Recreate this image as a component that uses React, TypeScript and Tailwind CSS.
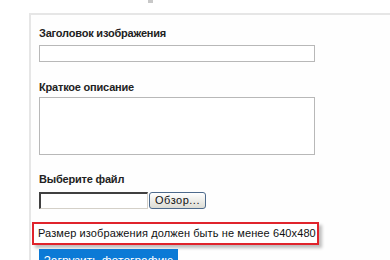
export default function App() {
  return (
    <div className="relative h-[260px] w-[390px] overflow-hidden bg-white font-['Liberation_Sans',Arial,sans-serif]">
      {/* bit of the heading above, cut off by the crop */}
      <div className="ml-[148px] h-[3px] w-[5px] bg-[#c8c8c8]" />

      <div className="ml-[29px] mt-[10px] border-l-2 border-t-2 border-[#e6e6e6] bg-[#fefefe] pl-[8px] pt-[12px]">
        <label className="block text-[11px] font-bold leading-[13px] tracking-[-0.2px] text-[#222]">
          Заголовок изображения
        </label>
        <input
          type="text"
          className="mt-[5px] block h-[17px] w-[276px] border border-[#b8b8b8] bg-white outline-none"
        />

        <label className="mt-[19px] block text-[11px] font-bold leading-[13px] tracking-[-0.2px] text-[#222]">
          Краткое описание
        </label>
        <textarea className="mt-[3px] block h-[58px] w-[276px] resize-none border border-[#b8b8b8] bg-white outline-none" />

        <label className="mt-[18px] block text-[11px] font-bold leading-[13px] tracking-[-0.2px] text-[#222]">
          Выберите файл
        </label>
        <div className="mt-[6px] flex h-[17px] items-stretch gap-[1px]">
          <div className="w-[109px] border border-t-2 border-l-2 border-[#d4d0c8] border-t-[#404040] border-l-[#404040] bg-white" />
          <button className="flex w-[57px] items-center justify-center rounded-[3px] border border-[#4d6a8c] bg-gradient-to-b from-[#ffffff] to-[#dcdcd4] text-[11px] tracking-[0.5px] text-[#111]">
            Обзор...
          </button>
        </div>

        <div className="ml-[-7px] mt-[13px] flex h-[23px] w-[287px] items-center whitespace-nowrap border-2 border-[#e0242c] bg-white pl-[4px] text-[11px] tracking-[0.1px] text-[#111] shadow-[3px_3px_3px_rgba(0,0,0,0.25)]">
          Размер изображения должен быть не менее 640x480
        </div>

        <button className="mt-[4px] flex h-[24px] w-[139px] items-center justify-center whitespace-nowrap bg-[#0b7ad6] text-[12px] text-white">
          Загрузить фотографию
        </button>
      </div>
    </div>
  );
}
